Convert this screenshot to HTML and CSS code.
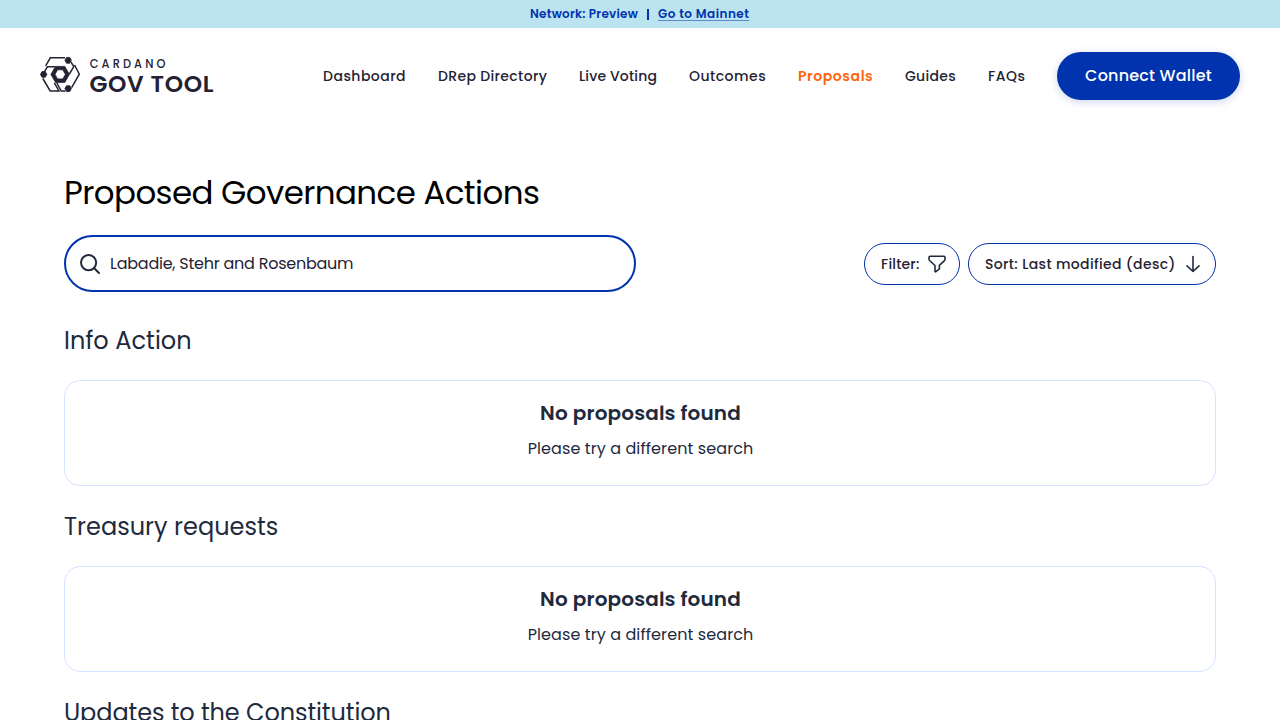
FILE: index.html
```html
<!DOCTYPE html>
<html lang="en">
<head>
<meta charset="utf-8">
<title>Proposed Governance Actions</title>
<link rel="stylesheet" href="styles.css">
</head>
<body>
<div class="banner"><span class="network">Network: Preview</span><span class="divider"></span><a class="mainnet" href="#">Go to Mainnet</a></div>
<header class="header">
  <svg class="logo" width="174" height="40" viewBox="0 0 174 40">
    <g fill="none" stroke="#242232" stroke-width="1.5">
      <path d="M25 3.8H10.3L5.6 12"/>
      <path d="M31 8.2L33.8 12.6 29.4 20"/>
      <path d="M34.6 11L39.3 20.2 31.6 33.6"/>
      <path d="M2.8 24.5L10.2 37H19L14.3 28.8"/>
      <path d="M3.8 18.8L7.4 12.8H15.2"/>
      <path d="M25.5 37H21.3L16.8 29"/>
    </g>
    <g fill="#242232" stroke="#242232" stroke-width=".8" stroke-linejoin="round">
      <path d="M24.9 6.3L26.5 3.4H29.8L31.4 6.3 29.8 9.2H26.5z"/>
      <path d="M.4 20.4L2 17.5H5.3L6.9 20.4 5.3 23.3H2z"/>
      <path d="M24.9 34.6L26.5 31.7H29.8L31.4 34.6 29.8 37.5H26.5z"/>
      <path fill-rule="evenodd" d="M10.9 20.4L15.5 12.4H24.8L29.4 20.4 24.8 28.4H15.5zM15 20.4L17.6 24.9H22.8L25.4 20.4 22.8 15.8H17.6z"/>
    </g>
    <text class="logo-small" x="49.7" y="14">CARDANO</text>
    <text class="logo-big" x="49.5" y="37.6" textLength="124">GOV TOOL</text>
  </svg>
  <nav class="nav">
    <a class="n1">Dashboard</a><a class="n2">DRep Directory</a><a class="n3">Live Voting</a><a class="n4">Outcomes</a><a class="n5 active">Proposals</a><a class="n6">Guides</a><a class="n7">FAQs</a>
  </nav>
  <button class="connect">Connect Wallet</button>
</header>
<main class="main">
  <h1 class="title">Proposed Governance Actions</h1>
  <div class="toolbar">
    <div class="search">
      <svg width="24" height="24" viewBox="0 0 24 24" fill="none" stroke="#212A3D" stroke-width="2" stroke-linecap="round"><circle cx="10.6" cy="10.6" r="7.6"/><path d="M16.2 16.2L21 21"/></svg>
      <span class="query">Labadie, Stehr and Rosenbaum</span>
    </div>
    <div class="actions">
      <button class="pill filter"><span>Filter:</span><svg width="20" height="20" viewBox="0 0 20 20" fill="none" stroke="#212A3D" stroke-width="1.6" stroke-linejoin="round"><path d="M3.2 2.2H16.8Q18 2.2 18 3.4V5.2Q18 6 17.4 6.6L12.4 11.3V14.8L8.6 17.8Q8 18 8 17.2V11.5L2.6 6.5Q2 6 2 5.2V3.4Q2 2.2 3.2 2.2z"/></svg></button>
      <button class="pill sort"><span>Sort: Last modified (desc)</span><svg width="20" height="20" viewBox="0 0 20 20" fill="none" stroke="#212A3D" stroke-width="1.6" stroke-linecap="round" stroke-linejoin="round"><path d="M10 2.5V17.5M4 11.8L10 17.5 16 11.8"/></svg></button>
    </div>
  </div>
  <section class="group"><h2 class="heading h-info">Info Action</h2>
    <div class="card"><p class="empty">No proposals found</p><p class="hint">Please try a different search</p></div></section>
  <section class="group"><h2 class="heading h-treasury">Treasury requests</h2>
    <div class="card"><p class="empty">No proposals found</p><p class="hint">Please try a different search</p></div></section>
  <section class="group last"><h2 class="heading h-const">Updates to the Constitution</h2></section>
</main>
</body>
</html>
```
FILE: styles.css
```css
* { box-sizing: border-box; }
body { margin: 0; height: 720px; overflow: hidden; background: #fff; font-family: Poppins, Inter, "Open Sans", sans-serif; color: #212A3D; }
h1, h2, p { margin: 0; font-weight: 400; white-space: nowrap; }
button { font-family: inherit; margin: 0; cursor: pointer; }
.banner { height: 28px; background: #BCE3F0; display: flex; align-items: center; padding-left: 530px; color: #0033AD; font-size: 12px; font-weight: 600; white-space: nowrap; }
.network { width: 108px; letter-spacing: .25px; }
.divider { width: 2px; height: 11px; margin: 0 10px 0 9px; background: #0033AD; }
.mainnet { width: 92px; margin-left: -1px; color: inherit; letter-spacing: .48px; text-decoration-thickness: 1px; text-decoration-color: rgba(0, 51, 173, .5); text-underline-offset: 2px; }
.header { height: 96px; padding: 0 40px; display: flex; align-items: center; }
.logo { flex: none; overflow: visible; margin-top: -4px; }
.logo text { font-family: inherit; fill: #242232; }
.logo-small { font-size: 11.4px; font-weight: 500; letter-spacing: 3.1px; }
.logo-big { font-size: 23.4px; font-weight: 600; }
.nav { display: flex; gap: 32px; margin-left: 109px; font-size: 14px; font-weight: 500; color: #242232; white-space: nowrap; }
.nav a { letter-spacing: .48px; }
.n1 { width: 83px; } .n2 { width: 109px; } .n3 { width: 78px; } .n4 { width: 77px; } .n5 { width: 75px; } .n6 { width: 51px; } .n7 { width: 37px; }
.nav .n2 { letter-spacing: .35px; }
.nav .n3 { letter-spacing: .15px; }
.nav .n6 { letter-spacing: .3px; }
.nav .active { color: #FF640A; font-weight: 600; letter-spacing: .57px; }
.connect { width: 183px; height: 48px; margin-left: 32px; padding: 0 0 1px; border: 0; border-radius: 24px; background: #0033AD; color: #fff; font-size: 16px; font-weight: 500; letter-spacing: .2px; white-space: nowrap; box-shadow: 0 2px 8px rgba(0, 51, 173, .2); }
.main { padding: 47px 64px 0; }
.title { height: 44px; line-height: 44px; font-size: 32.5px; letter-spacing: -.58px; color: #000; }
.toolbar { display: flex; justify-content: space-between; align-items: center; height: 57px; margin-top: 20px; }
.search { width: 572px; height: 57px; border: 2px solid #0033AD; border-radius: 29px; display: flex; align-items: center; padding-left: 12px; }
.query { margin-left: 8px; font-size: 16px; letter-spacing: -.24px; color: #242232; white-space: nowrap; }
.actions { display: flex; gap: 8px; }
.pill { height: 42px; border: 1px solid #0033AD; border-radius: 21px; background: #fff; display: flex; align-items: center; justify-content: space-between; color: #242232; font-size: 14px; font-weight: 500; white-space: nowrap; }
.pill span { padding-top: 2px; }
.filter { width: 96px; padding: 0 12px 0 16px; letter-spacing: .18px; }
.sort { width: 248px; padding: 0 12px 0 16px; letter-spacing: .35px; }
.group { height: 186px; padding-top: 31px; }
.last { height: 67px; }
.heading { height: 36px; line-height: 36px; font-size: 24px; }
.h-info { letter-spacing: .06px; }
.h-treasury { letter-spacing: .03px; }
.h-const { letter-spacing: -.09px; }
.card { height: 106px; margin-top: 21px; border: 1px solid #D6E2FF; border-radius: 16px; padding-top: 17px; text-align: center; }
.empty { height: 30px; line-height: 30px; padding-left: 1px; font-size: 20px; font-weight: 600; letter-spacing: .14px; }
.hint { height: 24px; line-height: 24px; margin-top: 9px; padding-left: 1px; font-size: 16px; letter-spacing: .09px; }
```
